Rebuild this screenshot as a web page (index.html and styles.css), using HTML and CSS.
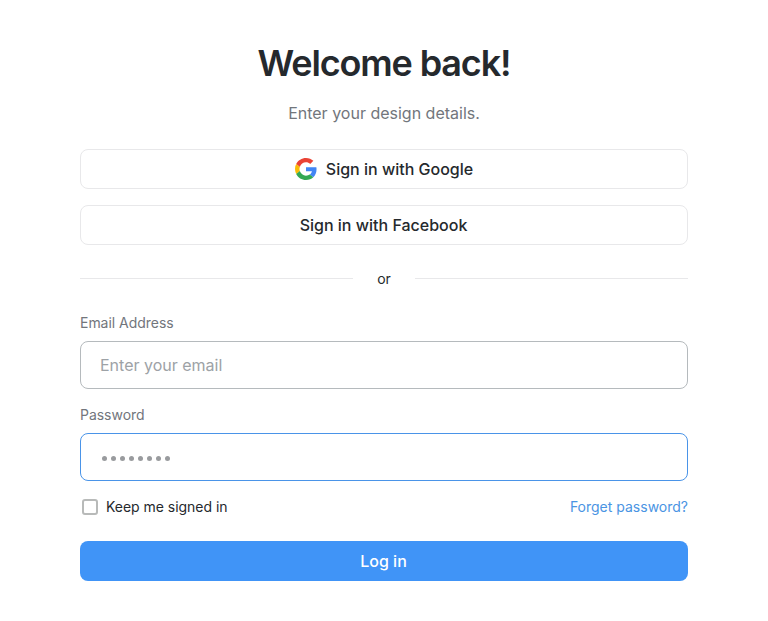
FILE: index.html
```html
<!DOCTYPE html>
<html lang="en">
<head>
<meta charset="utf-8">
<title>Log in</title>
<link rel="stylesheet" href="styles.css">
</head>
<body>
<main class="login">
  <h1 class="title">Welcome back!</h1>
  <p class="subtitle">Enter your design details.</p>
  <button class="social" type="button">
    <svg class="google" viewBox="0 0 48 48" aria-hidden="true">
      <path fill="#EA4335" d="M24 9.5c3.54 0 6.71 1.22 9.21 3.6l6.85-6.85C35.9 2.38 30.47 0 24 0 14.62 0 6.51 5.38 2.56 13.22l7.98 6.19C12.43 13.72 17.74 9.5 24 9.5z"/>
      <path fill="#4285F4" d="M46.98 24.55c0-1.57-.15-3.09-.38-4.55H24v9.02h12.94c-.58 2.96-2.26 5.48-4.78 7.18l7.73 6c4.51-4.18 7.09-10.36 7.09-17.65z"/>
      <path fill="#FBBC05" d="M10.53 28.59c-.48-1.45-.76-2.99-.76-4.59s.27-3.14.76-4.59l-7.98-6.19C.92 16.46 0 20.12 0 24c0 3.88.92 7.54 2.56 10.78l7.97-6.19z"/>
      <path fill="#34A853" d="M24 48c6.48 0 11.93-2.13 15.89-5.81l-7.73-6c-2.15 1.45-4.92 2.3-8.16 2.3-6.26 0-11.57-4.22-13.47-9.91l-7.98 6.19C6.51 42.62 14.62 48 24 48z"/>
    </svg>
    <span>Sign in with Google</span>
  </button>
  <button class="social" type="button"><span>Sign in with Facebook</span></button>
  <div class="divider"><span>or</span></div>
  <form class="form">
    <label class="label" for="email">Email Address</label>
    <input class="field" id="email" type="email" placeholder="Enter your email">
    <label class="label" for="password">Password</label>
    <div class="field field-active" id="password">
      <i class="dot"></i><i class="dot"></i><i class="dot"></i><i class="dot"></i><i class="dot"></i><i class="dot"></i><i class="dot"></i><i class="dot"></i>
    </div>
    <div class="options">
      <label class="keep"><input class="check" type="checkbox"><span>Keep me signed in</span></label>
      <a class="forgot">Forget password?</a>
    </div>
    <button class="submit" type="button">Log in</button>
  </form>
</main>
</body>
</html>
```

FILE: styles.css
```css
* { box-sizing: border-box; }
body {
  margin: 0;
  background: #fff;
  color: #25292d;
  font-family: Inter, "Liberation Sans", sans-serif;
}
button, input { font-family: inherit; }
.login {
  width: 608px;
  margin: 0 auto;
  padding-top: 40px;
}
.title {
  margin: 0;
  font-size: 36px;
  line-height: 46px;
  font-weight: 600;
  letter-spacing: -1.15px;
  text-align: center;
}
.subtitle {
  margin: 15px 0 24px;
  font-size: 16px;
  line-height: 24px;
  color: #72767c;
  text-align: center;
}
.social {
  display: flex;
  align-items: center;
  justify-content: center;
  gap: 8px;
  width: 100%;
  height: 40px;
  margin: 0 0 16px;
  padding: 0 1px 0 0;
  border: 1px solid #e8e8ea;
  border-radius: 8px;
  background: #fff;
  color: #25292d;
  font-size: 16px;
  font-weight: 500;
}
.google { width: 24px; height: 24px; padding: 1px; }
.divider {
  display: flex;
  align-items: center;
  gap: 24px;
  height: 20px;
  margin-top: 23px;
  font-size: 14px;
}
.divider::before, .divider::after {
  content: "";
  flex: 1;
  height: 1px;
  background: #e8e8ea;
}
.form { margin-top: 25px; }
.label {
  display: block;
  margin-bottom: 8px;
  font-size: 14px;
  line-height: 20px;
  letter-spacing: -0.03px;
  color: #72767c;
}
.field {
  display: flex;
  align-items: center;
  width: 100%;
  height: 48px;
  margin: 0 0 16px;
  padding: 0 19px;
  border: 1px solid #b5babd;
  border-radius: 8px;
  background: #fff;
  font-size: 16px;
  outline: none;
}
.field::placeholder { color: #9da2a6; opacity: 1; }
.field-active { gap: 4px; padding: 2px 21px 0; border-color: #4a94e8; }
.dot { width: 5px; height: 5px; border-radius: 50%; background: #999b9e; }
.options {
  display: flex;
  align-items: center;
  justify-content: space-between;
  height: 20px;
  font-size: 14px;
  line-height: 18px;
}
.keep { display: flex; align-items: center; gap: 8px; padding-left: 2px; letter-spacing: -0.03px; }
.check {
  appearance: none;
  width: 16px;
  height: 16px;
  margin: 0;
  border: 2px solid #b8bab9;
  border-radius: 3px;
}
.forgot { color: #4a94e3; }
.submit {
  width: 100%;
  height: 40px;
  margin-top: 24px;
  padding: 0 1px 0 0;
  border: 0;
  border-radius: 8px;
  background: #4094f7;
  color: #fff;
  font-size: 16px;
  font-weight: 500;
}
```
